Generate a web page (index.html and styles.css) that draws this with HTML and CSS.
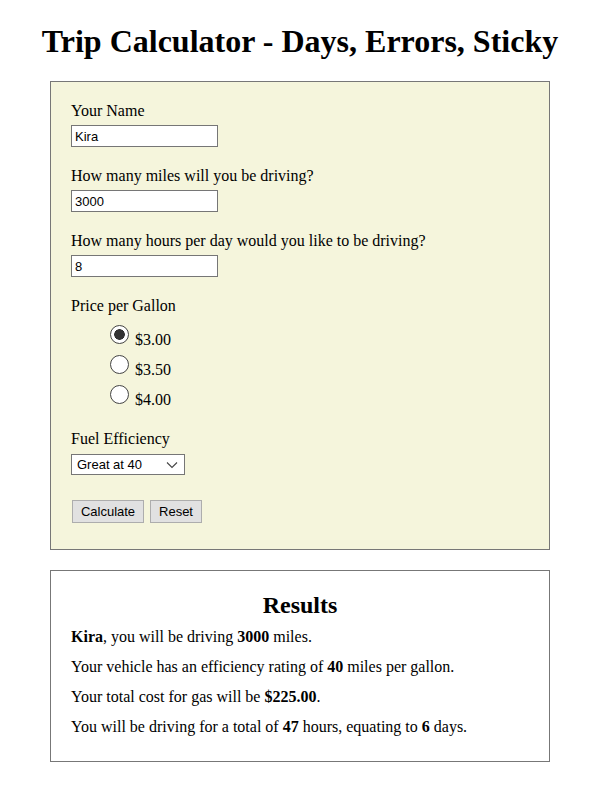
FILE: index.html
```html
<!DOCTYPE html>
<html lang="en">
<head>
<meta charset="utf-8">
<title>Trip Calculator</title>
<link rel="stylesheet" href="styles.css">
</head>
<body>
<h1 class="title">Trip Calculator - Days, Errors, Sticky</h1>
<form class="panel form-panel">
  <div class="field">
    <label class="label" for="name">Your Name</label>
    <input class="text-input" id="name" type="text" value="Kira">
  </div>
  <div class="field">
    <label class="label" for="miles">How many miles will you be driving?</label>
    <input class="text-input" id="miles" type="text" value="3000">
  </div>
  <div class="field">
    <label class="label" for="hours">How many hours per day would you like to be driving?</label>
    <input class="text-input" id="hours" type="text" value="8">
  </div>
  <div class="field">
    <span class="label">Price per Gallon</span>
    <div class="radios">
      <label class="radio-row"><input class="radio" type="radio" name="price" checked><span class="radio-text">$3.00</span></label>
      <label class="radio-row"><input class="radio" type="radio" name="price"><span class="radio-text">$3.50</span></label>
      <label class="radio-row"><input class="radio" type="radio" name="price"><span class="radio-text">$4.00</span></label>
    </div>
  </div>
  <div class="field">
    <label class="label" for="eff">Fuel Efficiency</label>
    <div class="select-wrap">
      <select class="select" id="eff">
        <option>Great at 40</option>
      </select>
      <svg class="chevron" width="12" height="8" viewBox="0 0 12 8"><path d="M1 1.5 L6 6.5 L11 1.5" fill="none" stroke="#444" stroke-width="1.1"/></svg>
    </div>
  </div>
  <div class="buttons">
    <button type="button" class="btn btn-calc">Calculate</button>
    <button type="button" class="btn btn-reset">Reset</button>
  </div>
</form>
<section class="panel results-panel">
  <h2 class="results-title">Results</h2>
  <p class="result"><b>Kira</b>, you will be driving <b>3000</b> miles.</p>
  <p class="result">Your vehicle has an efficiency rating of <b>40</b> miles per gallon.</p>
  <p class="result">Your total cost for gas will be <b>$225.00</b>.</p>
  <p class="result">You will be driving for a total of <b>47</b> hours, equating to <b>6</b> days.</p>
</section>
</body>
</html>
```

FILE: styles.css
```css
html, body {
  margin: 0;
  padding: 0;
  background: #fff;
}
body {
  font-family: "Liberation Serif", "Times New Roman", serif;
  font-size: 16px;
  color: #000;
}
.title {
  margin: 23px 0 21px;
  font-size: 32px;
  line-height: 37px;
  font-weight: bold;
  text-align: center;
}
.panel {
  width: 500px;
  box-sizing: border-box;
  margin: 0 auto;
  border: 1px solid #777;
}
.form-panel {
  background: #f5f5dc;
  padding: 20px 20px 26px;
  display: flex;
  flex-direction: column;
  gap: 20px;
}
.field {
  display: flex;
  flex-direction: column;
  align-items: flex-start;
}
.label {
  display: block;
  line-height: 18px;
  margin-bottom: 5px;
}
.text-input {
  width: 147px;
  height: 22px;
  box-sizing: border-box;
  margin: 0;
  padding: 0 3px;
  border: 1px solid #767676;
  background: #fff;
  font-family: "Liberation Sans", Tahoma, sans-serif;
  font-size: 13px;
  color: #000;
  outline: none;
}
.radios {
  display: flex;
  flex-direction: column;
  margin-top: 5px;
  margin-left: 39px;
  margin-bottom: -5px;
}
.radio-row {
  display: flex;
  align-items: flex-start;
  height: 30px;
}
.radio {
  -webkit-appearance: none;
  appearance: none;
  width: 19px;
  height: 19px;
  margin: 0 6px 0 0;
  box-sizing: border-box;
  border: 1px solid #444;
  border-radius: 50%;
  background: #fff;
}
.radio:checked {
  background: radial-gradient(circle, #333 0 5px, #fff 5.6px);
}
.radio-text {
  margin-top: 6px;
  line-height: 18px;
}
.select-wrap {
  position: relative;
  margin-top: 1px;
}
.select {
  -webkit-appearance: none;
  appearance: none;
  width: 114px;
  height: 21px;
  box-sizing: border-box;
  margin: 0;
  padding: 0 0 0 5px;
  border: 1px solid #767676;
  border-radius: 0;
  background: #fff;
  font-family: "Liberation Sans", Tahoma, sans-serif;
  font-size: 13px;
  color: #000;
}
.chevron {
  position: absolute;
  right: 7px;
  top: 7px;
  pointer-events: none;
}
.buttons {
  display: flex;
  gap: 6px;
  margin-top: 5px;
  padding-left: 1px;
}
.btn {
  height: 23px;
  box-sizing: border-box;
  margin: 0;
  padding: 0;
  border: 1px solid #adadad;
  background: #e1e1e1;
  font-family: "Liberation Sans", Tahoma, sans-serif;
  font-size: 13px;
  color: #000;
}
.btn-calc { width: 72px; }
.btn-reset { width: 52px; }
.results-panel {
  margin-top: 20px;
  background: #fff;
  padding: 19px 20px 19px;
}
.results-title {
  margin: 0 0 2px;
  font-size: 24px;
  line-height: 30px;
  text-align: center;
}
.result {
  margin: 0;
  line-height: 30px;
}
```
